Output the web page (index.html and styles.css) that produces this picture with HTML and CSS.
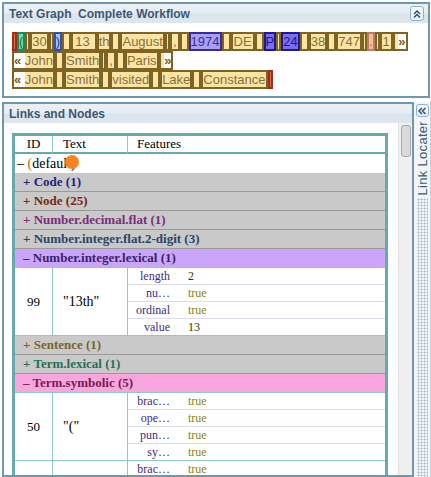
FILE: index.html
```html
<!DOCTYPE html>
<html lang="en">
<head>
    <meta charset="UTF-8">
    <title>Text Graph</title>
    <link rel="stylesheet" href="styles.css">
</head>
<body>
    <div class="panel top-panel">
        <div class="panel-head">
            <span class="panel-title">Text Graph  Complete Workflow</span>
            <button class="collapse-btn" title="Collapse">
                <svg width="10" height="10" viewBox="0 0 10 10"><path d="M2 5 L5 2 L8 5 M2 8.5 L5 5.5 L8 8.5" fill="none" stroke="#2c4d7d" stroke-width="1.5"/></svg>
            </button>
        </div>
        <div class="graph">
            <div class="tline">
                <span class="tk red"></span>
                <span class="tk green">(</span>
                <span class="tk nb"></span>
                <span class="tk">30</span>
                <span class="tk nb"></span>
                <span class="tk blue">)</span>
                <span class="tk sp"></span>
                <span class="tk pad-r">13</span>
                <span class="tk">th</span>
                <span class="tk sp"></span>
                <span class="tk">August</span>
                <span class="tk nb"></span>
                <span class="tk pad">,</span>
                <span class="tk sp"></span>
                <span class="tk lilac">1974</span>
                <span class="tk sp"></span>
                <span class="tk pad">DE</span>
                <span class="tk sp"></span>
                <span class="tk violet">P</span>
                <span class="tk nb"></span>
                <span class="tk violet">24</span>
                <span class="tk sp"></span>
                <span class="tk">38</span>
                <span class="tk sp"></span>
                <span class="tk">747</span>
                <span class="tk nb"></span>
                <span class="tk salmon">.</span>
                <span class="tk nb"></span>
                <span class="tk pad">1</span>
                <span class="tk"> <b class="mk">»</b></span>
            </div>
            <div class="tline">
                <span class="tk"><b class="mk">« </b>John</span>
                <span class="tk sp"></span>
                <span class="tk">Smith</span>
                <span class="tk nb"></span>
                <span class="tk pad">,</span>
                <span class="tk sp"></span>
                <span class="tk">Paris</span>
                <span class="tk"> <b class="mk">»</b></span>
            </div>
            <div class="tline">
                <span class="tk"><b class="mk">« </b>John</span>
                <span class="tk sp"></span>
                <span class="tk">Smith</span>
                <span class="tk sp"></span>
                <span class="tk">visited</span>
                <span class="tk sp"></span>
                <span class="tk">Lake</span>
                <span class="tk sp"></span>
                <span class="tk">Constance</span>
                <span class="tk red"></span>
            </div>
        </div>
    </div>

    <div class="lower">
        <div class="panel links-panel">
            <div class="panel-head">
                <span class="panel-title">Links and Nodes</span>
            </div>
            <div class="links-body">
                <div class="table-area">
                    <table class="grid">
                        <colgroup>
                            <col class="c-id">
                            <col class="c-text">
                            <col class="c-name">
                            <col>
                        </colgroup>
                        <tr class="head">
                            <th class="h-id">ID</th>
                            <th class="h-text">Text</th>
                            <th class="h-feat" colspan="2">Features</th>
                        </tr>
                        <tr class="root">
                            <td colspan="4">– <span class="paren">(</span>default)<span class="dot"></span></td>
                        </tr>
                        <tr class="grp g-code"><td colspan="4">+ Code (1)</td></tr>
                        <tr class="grp g-node"><td colspan="4">+ Node (25)</td></tr>
                        <tr class="grp g-dec"><td colspan="4">+ Number.decimal.flat (1)</td></tr>
                        <tr class="grp g-flat"><td colspan="4">+ Number.integer.flat.2-digit (3)</td></tr>
                        <tr class="grp open g-lex"><td colspan="4">– Number.integer.lexical (1)</td></tr>
                        <tr class="feat">
                            <td class="id" rowspan="4">99</td>
                            <td class="txt" rowspan="4">"13th"</td>
                            <td class="fn">length</td>
                            <td class="fv num">2</td>
                        </tr>
                        <tr class="feat"><td class="fn">nu…</td><td class="fv bool">true</td></tr>
                        <tr class="feat"><td class="fn">ordinal</td><td class="fv bool">true</td></tr>
                        <tr class="feat last"><td class="fn">value</td><td class="fv num">13</td></tr>
                        <tr class="grp g-sent"><td colspan="4">+ Sentence (1)</td></tr>
                        <tr class="grp g-term"><td colspan="4">+ Term.lexical (1)</td></tr>
                        <tr class="grp open g-sym"><td colspan="4">– Term.symbolic (5)</td></tr>
                        <tr class="feat">
                            <td class="id" rowspan="4">50</td>
                            <td class="txt" rowspan="4">"("</td>
                            <td class="fn">brac…</td>
                            <td class="fv bool">true</td>
                        </tr>
                        <tr class="feat"><td class="fn">ope…</td><td class="fv bool">true</td></tr>
                        <tr class="feat"><td class="fn">pun…</td><td class="fv bool">true</td></tr>
                        <tr class="feat last"><td class="fn">sy…</td><td class="fv bool">true</td></tr>
                        <tr class="feat">
                            <td class="id" rowspan="4">51</td>
                            <td class="txt" rowspan="4">")"</td>
                            <td class="fn">brac…</td>
                            <td class="fv bool">true</td>
                        </tr>
                        <tr class="feat"><td class="fn">clo…</td><td class="fv bool">true</td></tr>
                        <tr class="feat"><td class="fn">pun…</td><td class="fv bool">true</td></tr>
                        <tr class="feat last"><td class="fn">sy…</td><td class="fv bool">true</td></tr>
                    </table>
                </div>
                <div class="scroll"><div class="thumb"></div></div>
            </div>
        </div>
        <div class="locater">
            <button class="loc-btn" title="Expand">
                <svg width="10" height="10" viewBox="0 0 10 10"><path d="M5 2 L2 5 L5 8 M8.5 2 L5.5 5 L8.5 8" fill="none" stroke="#2c4d7d" stroke-width="1.5"/></svg>
            </button>
            <span class="loc-text">Link Locater</span>
            <div class="loc-dots"></div>
        </div>
    </div>
</body>
</html>
```

FILE: styles.css
```css
* {
    box-sizing: border-box;
}
body {
    margin: 0;
    padding: 2px 0 0 2px;
    height: 477px;
    overflow: hidden;
    background: #fff;
    font-family: "Liberation Sans", Arial, sans-serif;
}

/* panels */
.panel {
    border: 2px solid #7097b0;
    background: #fff;
}
.panel-head {
    display: flex;
    align-items: center;
    justify-content: space-between;
    height: 19px;
    padding: 0 4px 0 5px;
    background: linear-gradient(#eaf0f4 0%, #e6edf2 48%, #dbe4ec 52%, #dfe7ee 100%);
}
.panel-title {
    font-size: 12px;
    font-weight: bold;
    color: #3c5875;
    white-space: pre;
}
.collapse-btn {
    width: 14px;
    height: 15px;
    padding: 0;
    display: flex;
    align-items: center;
    justify-content: center;
    border: 1px solid #8fb1d6;
    border-radius: 3px;
    background: linear-gradient(#ffffff, #e8f0f8);
}

/* text graph */
.top-panel {
    width: 428px;
    height: 96px;
}
.graph {
    padding: 9px 0 0 8px;
}
.tline {
    display: flex;
}
.tk {
    display: block;
    flex: none;
    height: 19px;
    border: 2px solid #7e6322;
    background: #fde4a4;
    color: #86703c;
    font-size: 13px;
    line-height: 15px;
    white-space: pre;
}
.pad {
    padding: 0 1px;
}
.pad-r {
    padding: 0 5px 0 2px;
}
.nb {
    width: 5px;
}
.sp {
    width: 9px;
}
.red {
    width: 5px;
    background: #e36b4c;
    border-color: #98301c;
}
.green {
    background: #5fe3a6;
    border-color: #2b8458;
    color: #2b6a4a;
}
.blue {
    background: #a9bff5;
    border-color: #3553a0;
    color: #2c3f88;
}
.lilac {
    background: #aa9ff6;
    border-color: #3a2c98;
    color: #3e2f92;
}
.violet {
    background: #7b6cf0;
    border-color: #1e1990;
    color: #201a80;
}
.salmon {
    background: #f9b99c;
    border-color: #b88060;
    color: #a06a4a;
}
.mk {
    background: #fff;
    color: #7a5a14;
}

/* links and nodes */
.lower {
    display: flex;
    margin-top: 4px;
}
.links-panel {
    width: 412px;
    height: 375px;
    display: flex;
    flex-direction: column;
}
.links-body {
    flex: 1;
    display: flex;
    min-height: 0;
}
.table-area {
    flex: 1;
    overflow: hidden;
    padding: 10px 0 0 8px;
}
.scroll {
    width: 14px;
    background: #f0f0f0;
    border-left: 1px solid #e2e2e2;
    padding: 2px 0 0 2px;
}
.thumb {
    width: 10px;
    height: 32px;
    border: 1px solid #a9a9a9;
    border-radius: 3px;
    background: #dadada;
}

.grid {
    width: 376px;
    table-layout: fixed;
    border-collapse: separate;
    border-spacing: 0;
    border: 3px solid #68a9ab;
    font-family: "Liberation Serif", "Times New Roman", serif;
    color: #000;
}
.grid th, .grid td {
    padding: 0;
    white-space: nowrap;
    overflow: hidden;
}
.c-id { width: 38px; }
.c-text { width: 75px; }
.c-name { width: 52px; }

.head th {
    height: 18px;
    font-size: 13px;
    font-weight: normal;
    text-align: left;
    border-bottom: 2px solid #68a9ab;
}
.head .h-id {
    text-align: center;
    border-right: 1px solid #8ccaca;
}
.head .h-text {
    padding-left: 10px;
    border-right: 1px solid #8ccaca;
}
.head .h-feat {
    padding-left: 9px;
}

.root td {
    height: 19px;
    font-size: 14px;
    padding-left: 2px;
    position: relative;
}
.paren {
    color: #c8660e;
}
.dot {
    position: absolute;
    left: 50px;
    top: 1px;
    width: 14px;
    height: 14px;
    border-radius: 50%;
    background: #fa8423;
}

.grp td {
    height: 19px;
    padding-left: 8px;
    font-size: 13px;
    font-weight: bold;
    background: #c9c9c9;
    border-bottom: 1px solid #9a9a9a;
}
.grp.open td {
    border-bottom-color: #8ccaca;
}
.g-code td { color: #261e7e; }
.g-node td { color: #7a2812; }
.g-dec td { color: #7c2c7c; }
.g-flat td { color: #2a4766; }
.g-lex td { color: #3a1f6e; background: #c9a6f9; }
.g-sent td { color: #7a6428; }
.g-term td { color: #237256; }
.g-sym td { color: #7a1a4e; background: #f9a6df; }

.feat td {
    height: 17px;
    font-size: 12px;
    border-bottom: 1px solid #dcdcec;
}
.feat td.id {
    text-align: center;
    font-size: 13px;
    border-right: 1px solid #8ccaca;
    border-bottom-color: #8ccaca;
}
.feat td.txt {
    padding-left: 10px;
    font-size: 14px;
    border-right: 1px solid #8ccaca;
    border-bottom-color: #8ccaca;
}
.feat.last td {
    border-bottom-color: #8ccaca;
}
.grid .fn {
    text-align: right;
    padding-right: 10px;
    color: #3a2e80;
}
.grid .fv {
    padding-left: 8px;
}
.num { color: #4a2a0c; }
.bool { color: #8a8420; }

/* link locater strip */
.locater {
    width: 17px;
    height: 375px;
    display: flex;
    flex-direction: column;
    align-items: center;
    background: #f3f6f9;
    border-right: 1px solid #c9d3dc;
}
.loc-btn {
    width: 13px;
    height: 13px;
    margin-top: 2px;
    padding: 0;
    display: flex;
    align-items: center;
    justify-content: center;
    border: 1px solid #8fb1d6;
    border-radius: 3px;
    background: linear-gradient(#ffffff, #e8f0f8);
}
.loc-text {
    margin-top: 4px;
    writing-mode: vertical-rl;
    transform: rotate(180deg);
    font-size: 13px;
    line-height: 13px;
    letter-spacing: 0.3px;
    color: #3d5a76;
}
.loc-dots {
    flex: 1;
    width: 11px;
    margin-top: 3px;
    background-image: radial-gradient(circle, #a9b9c9 0.9px, transparent 1.1px);
    background-size: 3px 3px;
}
```
